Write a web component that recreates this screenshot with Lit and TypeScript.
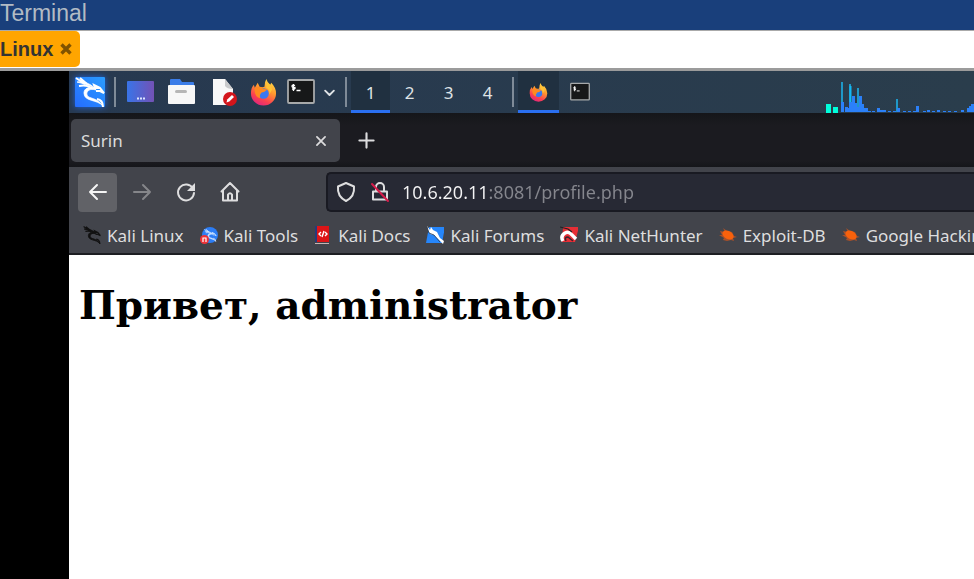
import { LitElement, html, css, svg } from "lit";
import { customElement } from "lit/decorators.js";

const dragon = svg`
  <path d="M2 5 C9 4 17 7 21 13 C15 11 11 14 12 18 C13 22 22 20 28 29 C22 22 9 25 9 16 C9 11 15 9 19 11 C15 8 9 7 2 5Z"/>
  <path d="M4 9 C10 8 14 9 17 11 M5 1 L12 7 M1 1 L10 7 M19 11 L25 11 L29 16 L25 14 L21 14 M20 11 L19 8 L25 11 M22 22 Q28 23 28 30" fill="none" stroke-width="2"/>`;

const kaliLogo = html`<svg class="glow" width="34" height="34" viewBox="0 0 34 34" aria-hidden="true">
  <defs><linearGradient id="k" x1="1" y1="0" x2="0" y2="1"><stop offset="0" stop-color="#2a9cff"/><stop offset="1" stop-color="#256cff"/></linearGradient></defs>
  <rect x="2" y="2" width="30" height="30" rx="1" fill="url(#k)"/>
  <g fill="#fff" stroke="#fff" stroke-width=".8" transform="translate(2 2)">${dragon}</g></svg>`;

const desktopIcon = html`<svg width="28" height="28" viewBox="0 0 28 28" aria-hidden="true">
  <defs><linearGradient id="d"><stop stop-color="#3974e8"/><stop offset="1" stop-color="#7352b5"/></linearGradient></defs>
  <rect x="0" y="3" width="27" height="21" rx="1" fill="url(#d)"/><path d="M10 20.500h8" stroke="#dce6ff" stroke-width="2" stroke-dasharray="2 1"/></svg>`;

const folderIcon = html`<svg width="28" height="28" viewBox="0 0 28 28" aria-hidden="true">
  <path d="M2 2q0-1 1-1h9l2 3h11q1 0 1 1v5H2z" fill="#3b7de8"/><rect y="7" width="27" height="19" rx="1" fill="#f7f7f7"/>
  <rect x="7" y="12" width="12" height="3" rx="1.500" fill="#b6b6b6"/></svg>`;

const editIcon = html`<svg width="28" height="28" viewBox="0 0 28 28" aria-hidden="true">
  <path d="M4 1h12l8 10v16H4z" fill="#f8f8f8"/><path d="M16 1l8 10q-6 0-8-3z" fill="#c9cacc"/>
  <circle cx="21" cy="21" r="7" fill="#d3151b"/><path d="M17.500 24.500l.7-3L23 17l2 2-4.700 4.600z" fill="#fff"/></svg>`;

const firefox = (size: number) => html`<svg width=${size} height=${size} viewBox="0 0 28 28" aria-hidden="true">
  <defs><linearGradient id="f" x1=".8" y1="0" x2=".3" y2="1"><stop stop-color="#ffe24a"/><stop offset=".4" stop-color="#ff9a2e"/><stop offset=".75" stop-color="#fb4150"/><stop offset="1" stop-color="#e0257e"/></linearGradient></defs>
  <path d="M17 0q1 4 4 6l1-2q5 5 5 11a13 12.500 0 0 1-26 0q0-6 3-9l1 3 3-5 2 4q3 1 5 0 0-5 2-8z" fill="url(#f)"/>
  <circle cx="14" cy="15" r="5.500" fill="#3b78f0"/>
  <path d="M5 9q5-2 9 1l4 1q-3 3-6 3-3 3-1 6-7-1-6-11z" fill="#ff8a1f"/>
  <path d="M17 9q4 2 3 7l3-5-2-5-4-2z" fill="#ffc335"/></svg>`;

const terminal = (size: number) => html`<svg width=${size} height=${size} viewBox="0 0 28 28" aria-hidden="true">
  <rect x="1" y="2" width="26" height="23" rx="1" fill="#171819" stroke="#a7a9aa" stroke-width="1.800"/>
  <path d="M8 7.500q-3-1-3 .7t3 1.300q.8 2-3 1.500M6.500 6v7M9.500 12.500h4" fill="none" stroke="#fff" stroke-width="1.300"/></svg>`;

const line = (d: string, size = 24) => html`<svg class="line ${size < 20 ? "small" : ""}" width=${size} height=${size} viewBox="0 0 24 24" aria-hidden="true"><path d=${d}/></svg>`;

const reload = html`<svg class="line" width="24" height="24" viewBox="0 0 24 24" aria-hidden="true">
  <path d="M19 8.500A8 8 0 1 0 20 13"/><path d="M21 3v8h-8z" fill="currentColor" stroke="none"/></svg>`;

const lock = html`<svg class="line" width="24" height="24" viewBox="0 0 24 24" aria-hidden="true">
  <path d="M8 10V7a4 4 0 0 1 8 0V10M5 11.500h14v8H5z"/><path d="M4 4l16 17" stroke="#d61b4a"/></svg>`;

const mark = (body: unknown) => html`<svg width="18" height="18" viewBox="0 0 18 18" aria-hidden="true">${body}</svg>`;
const bug = svg`<path d="M1 5l5 1-2-4 4 3 5 1 2 4 3 1-4 1 1 3-3-1-4 1-4-1 1-2-5-3 3 0z" fill="#a8502a"/><ellipse cx="9" cy="9" rx="6" ry="4" transform="rotate(30 9 9)" fill="#f8610c"/>`;

const bookmarks = [
  { name: "Kali Linux", icon: svg`<g fill="#111" stroke="#111" stroke-width="1.500" transform="scale(.6)">${dragon}</g>` },
  { name: "Kali Tools", icon: svg`<circle cx="10" cy="9" r="8" fill="#2c7df5"/><g fill="#cfe5ff" stroke="#cfe5ff" transform="translate(4 3) scale(.42)">${dragon}</g><circle cx="4.500" cy="13.500" r="4.500" fill="#ee3338"/><path d="M3 16v-4h3v4" fill="none" stroke="#fff" stroke-width="1.200"/>` },
  { name: "Kali Docs", icon: svg`<path d="M1 0h3v16H1z" fill="#273a7c"/><path d="M3 0h12v16H3z" fill="#dc1517"/><path d="M1 17h14v1H1z" fill="#c7b4b4"/><path d="M7 6L5 8l2 2M11 6l2 2-2 2M10 5L8 11" fill="none" stroke="#fff" stroke-width="1.400"/>` },
  { name: "Kali Forums", icon: svg`<path d="M3 1h16l-3 16H0z" fill="#2686fa"/><path d="M1 0l1 4 2 4 4 1 5 5 4 4 1-3-4-3-3-6-4-2-2-3-1 3z" fill="#fff"/><path d="M1 1l2 6 5 2 6 7" fill="none" stroke="#26374d" stroke-width=".8"/>` },
  { name: "Kali NetHunter", icon: svg`<path d="M3 1h16l-4 15H2z" fill="#e62e35"/><path d="M3 15q-3-5 2-8 4-2 7 2l4 4" fill="none" stroke="#fff" stroke-width="3.400"/><path d="M6 15q-2-4 2-4l5 4" fill="none" stroke="#3b2530" stroke-width="1.600"/><path d="M0 1l8 2 4 3" fill="none" stroke="#222" stroke-width="1.200"/>` },
  { name: "Exploit-DB", icon: bug },
  { name: "Google Hacking DB", icon: bug },
];

const spikes: [number, number][] = [
  [15, 10], [19, 5], [21, 4], [23, 10], [26, 16], [28, 9], [30, 5], [33, 16], [35, 8], [37, 4], [39, 4], [42, 1],
  [46, 1], [51, 4], [54, 2], [57, 2], [62, 1], [67, 1], [71, 4], [77, 1], [82, 1], [87, 1], [90, 6], [97, 1],
  [101, 2], [106, 1], [111, 2], [117, 1], [122, 1], [128, 1], [135, 2], [141, 4], [143, 6], [145, 8],
];

@customElement("app-root")
export class AppRoot extends LitElement {
  static styles = css`
    :host { display: flex; flex-direction: column; min-height: 100vh; background: #fff; overflow: hidden; font-family: "Noto Sans", sans-serif; }
    * { box-sizing: border-box; }
    svg { display: block; flex: none; }
    button { font: inherit; color: inherit; background: none; border: 0; padding: 0; margin: 0; display: flex; align-items: center; justify-content: center; flex: none; }
    .title { height: 30px; background: #193f7b; color: #b2bbc4; font: 23px/26px "Liberation Sans", sans-serif; margin: 0; }
    .sessions { height: 41px; border-top: 1px solid #aaa; border-bottom: 3px solid #9b9b9b; display: flex; align-items: flex-start; font-family: "Liberation Sans", sans-serif; }
    .session { height: 36px; width: 80px; background: #ffa500; color: #333; border-radius: 0 5px 5px 0; display: flex; align-items: center; font-size: 20px; font-weight: 700; gap: 7px; }
    .session button { color: #805300; }
    .stage { display: flex; flex: 1; background: #000; padding-left: 69px; min-width: 0; }
    .desktop { flex: 1; min-width: 0; background: #fff; display: flex; flex-direction: column; }
    .panel { height: 42px; display: flex; flex: none; padding-left: 2px; background: linear-gradient(90deg, #273950, #2a3d4c); color: #dfe3e6; font-size: 17px; }
    .panel button { width: 41px; }
    .panel .menu { width: 38px; }
    .glow { filter: drop-shadow(0 0 3px #1f64e0); }
    .panel .term { width: 34px; }
    .panel .more { width: 22px; }
    .panel .space { width: 39px; }
    .panel .active { background: #203040; border-bottom: 3px solid #2a6ff0; padding-top: 3px; }
    .sep { width: 11px; flex: none; display: flex; justify-content: center; align-items: center; }
    .sep::before { content: ""; width: 2px; height: 30px; background: #7f8b98; }
    .graph { margin-left: auto; }
    .tabs { height: 54px; flex: none; padding: 6px 2px 5px; display: flex; background: linear-gradient(#15161a, #1b1b20 12px, #1b1b20 48px, #15161a); color: #dcdcdd; font-size: 17px; }
    .tab { width: 269px; background: #42444b; border-radius: 5px; display: flex; align-items: center; justify-content: space-between; padding: 0 7px 0 10px; }
    .tab button { width: 24px; height: 24px; }
    .plus { width: 52px; }
    .line { fill: none; stroke: currentColor; stroke-width: 2; stroke-linecap: round; stroke-linejoin: round; }
    .small { stroke-width: 3; }
    .bars { background: #42444b; border-bottom: 2px solid #1d1e22; flex: none; color: #dededf; }
    .toolbar { display: flex; height: 50px; align-items: center; padding-left: 9px; gap: 5px; }
    .toolbar button { width: 39px; height: 39px; border-radius: 4px; }
    .toolbar .back { background: #616267; color: #f5f5f5; }
    .toolbar .off { color: #85868a; }
    .address { flex: 1; min-width: 0; height: 40px; margin-left: 72px; border: 2px solid #191a22; border-right: 0; border-radius: 5px 0 0 5px; background: #272934; display: flex; align-items: center; padding-left: 6px; gap: 10px; }
    .url { flex: 1; min-width: 0; height: 32px; border: 0; padding: 0; margin: 0; outline: 0; font: 18px/32px "Noto Sans", sans-serif; color: transparent; caret-color: #fff; background: linear-gradient(90deg, #f4f4f5 84px, #85868d 84px); background-clip: text; -webkit-background-clip: text; }
    .bookmarks { height: 36px; display: flex; align-items: center; gap: 16px; padding: 0 0 0 14px; overflow: hidden; white-space: nowrap; font-size: 17px; }
    .bookmarks a { color: inherit; text-decoration: none; display: flex; align-items: center; gap: 6px; flex: none; }
    h1 { margin: 26px 0 0 10px; font: 700 39px/48px "DejaVu Serif", serif; color: #000; white-space: nowrap; }
  `;

  render() {
    return html`
      <h2 class="title">Terminal</h2>
      <div class="sessions">
        <div class="session">Linux<button aria-label="Close Linux">
          <svg width="12" height="12" viewBox="0 0 12 12" stroke="currentColor" stroke-width="3.400"><path d="M1.500 1.500l9 9M10.500 1.500l-9 9"/></svg></button></div>
      </div>
      <div class="stage">
        <div class="desktop">
          <div class="panel">
            <button class="menu" aria-label="Applications">${kaliLogo}</button>
            <span class="sep"></span>
            <button aria-label="Show desktop">${desktopIcon}</button>
            <button aria-label="Files">${folderIcon}</button>
            <button aria-label="Text editor">${editIcon}</button>
            <button aria-label="Firefox">${firefox(27)}</button>
            <button class="term" aria-label="Terminal">${terminal(28)}</button>
            <button class="more" aria-label="More">${line("M5 9l7 7 7-7", 15)}</button>
            <span class="sep"></span>
            ${[1, 2, 3, 4].map((n) => html`<button class="space ${n === 1 ? "active" : ""}">${n}</button>`)}
            <span class="sep"></span>
            <button class="active" aria-label="Firefox window">${firefox(19)}</button>
            <button aria-label="Terminal window">${terminal(20)}</button>
            <svg class="graph" width="148" height="42" viewBox="0 0 148 42" aria-hidden="true">
              <path d="M0 33h5v9H0zM7 36h5v6H7z" fill="#00ffdc"/>
              <path d="M16 11v30M24 13v28M32 17v24M71 28v13" stroke="#1f98c8" stroke-width="2"/>
              <path d="M24.500 15v26" stroke="#12b9f5" stroke-width="2"/>
              ${spikes.map(([x, h]) => svg`<rect x=${x} y=${41 - h} width="3" height=${h} fill="#2b80f8"/>`)}
            </svg>
          </div>
          <div class="tabs">
            <div class="tab"><span>Surin</span><button aria-label="Close tab">${line("M5 5l14 14M19 5L5 19", 14)}</button></div>
            <button class="plus" aria-label="New tab">${line("M12 2v20M2 12h20", 17)}</button>
          </div>
          <div class="bars">
            <div class="toolbar">
              <button class="back" aria-label="Back">${line("M20 12H4M11 5l-7 7 7 7")}</button>
              <button class="off" aria-label="Forward">${line("M4 12h16M13 5l7 7-7 7")}</button>
              <button aria-label="Reload">${reload}</button>
              <button aria-label="Home">${line("M3.500 11.500L12 3l8.500 8.500M5 10.500V20.500h14V10.500M10 20v-5.500q2-2.500 4 0V20")}</button>
              <div class="address">
                ${line("M12 3l8 3.500q1 10-8 14.500Q3 16.500 4 6.500z")}
                ${lock}
                <input class="url" aria-label="Address" value="10.6.20.11:8081/profile.php" />
              </div>
            </div>
            <nav class="bookmarks">${bookmarks.map((b) => html`<a href="#">${mark(b.icon)}<span>${b.name}</span></a>`)}</nav>
          </div>
          <h1>Привет, administrator</h1>
        </div>
      </div>
    `;
  }
}
